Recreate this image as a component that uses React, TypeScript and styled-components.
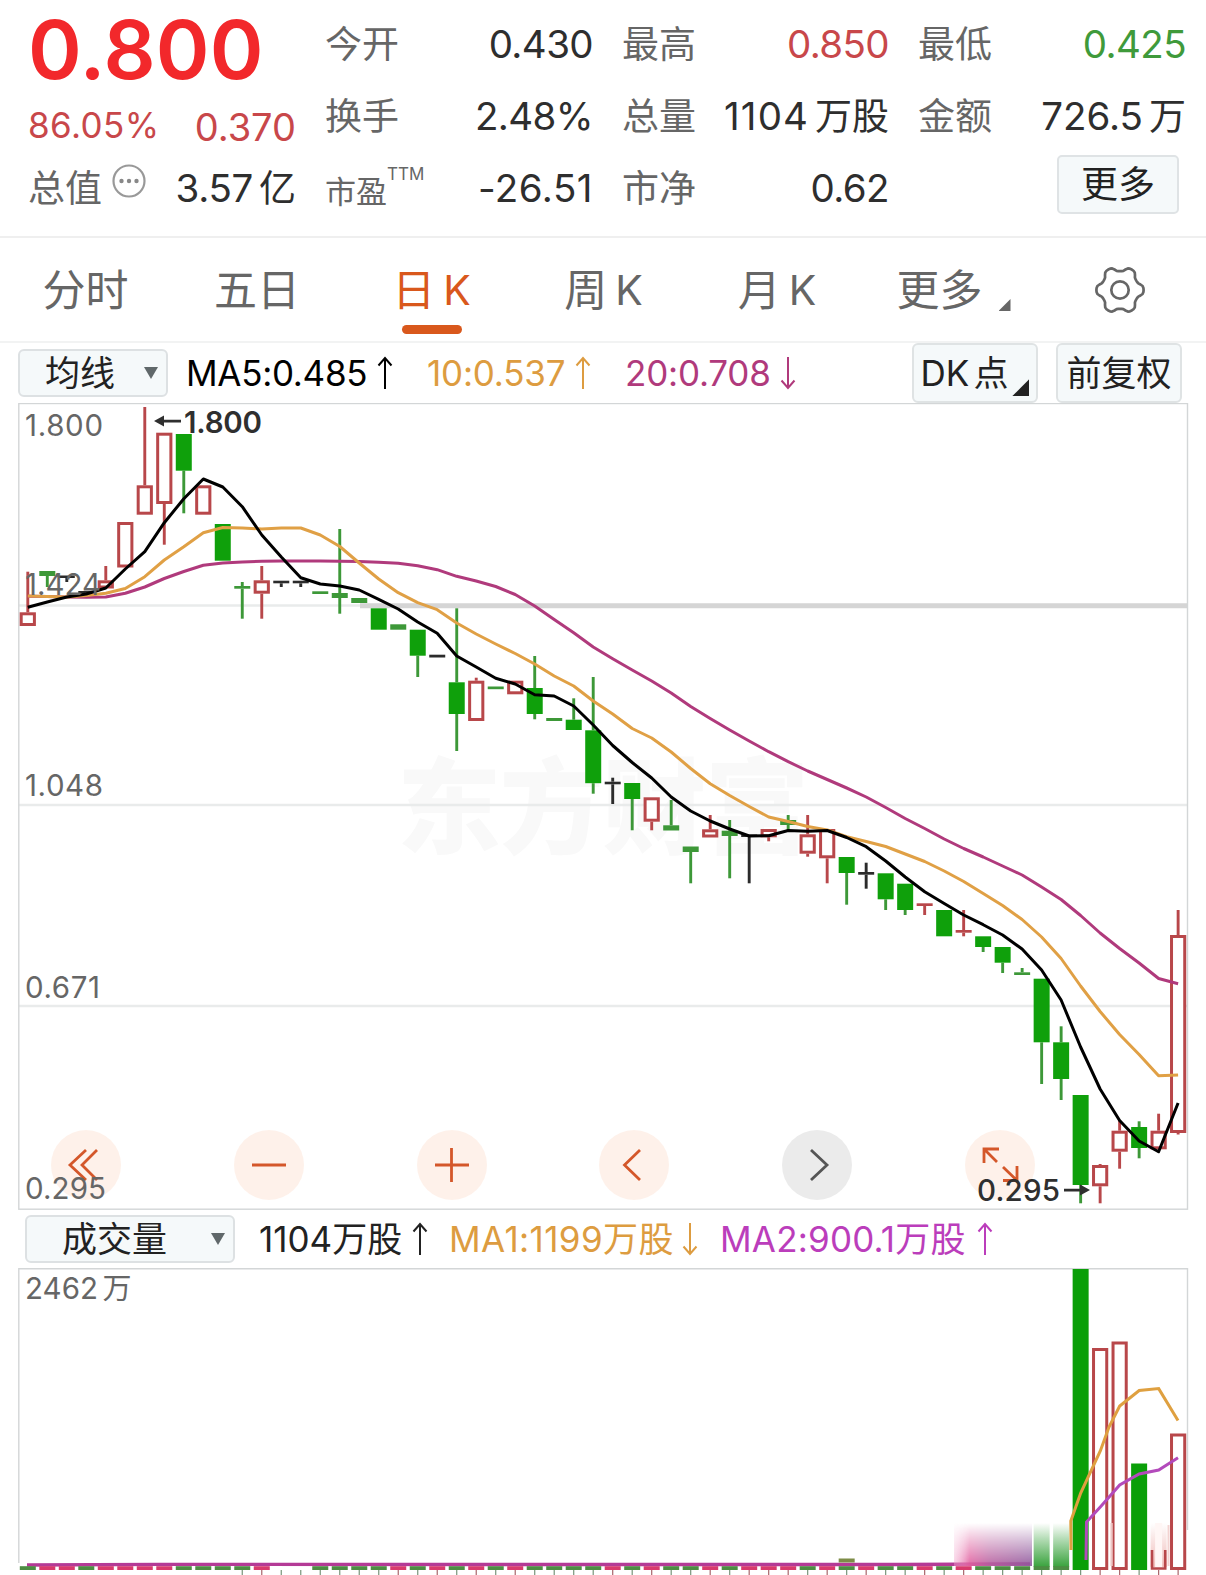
import React from "react";
import styled, { createGlobalStyle } from "styled-components";

const GlobalStyle = createGlobalStyle`
  body { margin: 0; background: #fff; }
  * { box-sizing: border-box; }
`;

const FONT = `Inter, "Noto Sans CJK SC", sans-serif`;
const RED = "#c8474a";
const GREEN = "#3f9a3b";
const ORANGE = "#dd9c40";
const MAGENTA = "#b03a7c";
const VIOLET = "#bb3dbb";
const ACCENT = "#d9581c";

const Page = styled.main`
  width: 1206px;
  height: 1575px;
  overflow: hidden;
  background: #fff;
  font-family: ${FONT};
  color: #2e2e2e;
  white-space: nowrap;
`;

/* ---------- quote header ---------- */

const Quote = styled.section`
  display: grid;
  grid-template-columns: 268px 268px 267px 268px;
  column-gap: 29px;
  height: 238px;
  padding: 8px 0 0 28px;
  border-bottom: 2px solid #efefef;
`;

const Column = styled.div`
  display: flex;
  flex-direction: column;
`;

const Row = styled.div`
  display: flex;
  align-items: center;
  justify-content: space-between;
  height: 72px;
  line-height: 72px;
`;

const Price = styled.div`
  height: 83px;
  line-height: 83px;
  font-size: 81.5px;
  font-weight: 600;
  letter-spacing: 0.1px;
  color: #f2282b;
`;

const ChangeRow = styled.div`
  display: flex;
  align-items: center;
  justify-content: space-between;
  height: 50px;
  margin: 9px 0 2px;
  line-height: 50px;
  color: ${RED};
`;

const Change = styled.span<{ $size: number; $shift?: number; $track?: number }>`
  font-size: ${(p) => p.$size}px;
  letter-spacing: ${(p) => p.$track ?? 0}px;
  padding-top: ${(p) => p.$shift ?? 0}px;
`;

const Label = styled.span<{ $small?: boolean }>`
  display: flex;
  align-items: center;
  font-size: ${(p) => (p.$small ? 31 : 37)}px;
  padding-top: ${(p) => (p.$small ? 8 : 2)}px;
  color: #666;
`;

const Sup = styled.sup`
  font-size: 17px;
  font-weight: 400;
  line-height: 17px;
  margin-bottom: 36px;
`;

const Value = styled.span<{ $color?: string; $track?: number }>`
  display: flex;
  font-size: 38.5px;
  letter-spacing: ${(p) => p.$track ?? -0.6}px;
  color: ${(p) => p.$color ?? "#2e2e2e"};
`;

const Unit = styled.span`
  margin-left: 6px;
  padding-top: 1px;
  font-size: 37px;
  letter-spacing: 0;
`;

const Bubble = styled.svg`
  width: 34px;
  height: 34px;
  margin: -16px 0 0 10px;
`;

const MoreButton = styled.button`
  width: 122px;
  height: 59px;
  margin: 0 7px 7px auto;
  padding: 0;
  border: 2px solid #dfe3e5;
  border-radius: 5px;
  background: #f5f9fa;
  font-family: ${FONT};
  font-size: 37px;
  line-height: 56px;
  color: #222;
`;

/* ---------- period tabs ---------- */

const Tabs = styled.nav`
  display: flex;
  height: 105px;
  border-bottom: 2px solid #f2f3f3;
`;

const Tab = styled.div<{ $width: number; $active?: boolean }>`
  display: flex;
  flex-direction: column;
  align-items: center;
  width: ${(p) => p.$width}px;
  padding-top: 26px;
  font-size: 43px;
  line-height: 52px;
  color: ${(p) => (p.$active ? ACCENT : "#666")};
`;

const TabText = styled.span`
  display: flex;
  gap: 8px;
`;

const Latin = styled.span`
  font-size: 41px;
`;

const Underline = styled.span`
  width: 60px;
  height: 9px;
  margin-top: 9px;
  border-radius: 5px;
  background: ${ACCENT};
`;

const Corner = styled.i<{ $size: number; $color: string; $gap?: number; $lift: number }>`
  align-self: flex-end;
  width: ${(p) => p.$size}px;
  height: ${(p) => p.$size}px;
  margin: 0 0 ${(p) => p.$lift}px ${(p) => p.$gap ?? 0}px;
  background: ${(p) => p.$color};
  clip-path: polygon(100% 0, 100% 100%, 0 100%);
`;

/* ---------- indicator bars ---------- */

const Bar = styled.div<{ $height: number; $left: number }>`
  display: flex;
  align-items: center;
  height: ${(p) => p.$height}px;
  padding: 0 24px 0 ${(p) => p.$left}px;
`;

const Select = styled.div<{ $width: number; $pad: number }>`
  display: flex;
  align-items: center;
  justify-content: space-between;
  width: ${(p) => p.$width}px;
  height: 48px;
  padding: 0 8px 0 ${(p) => p.$pad}px;
  border: 2px solid #dde1e3;
  border-radius: 6px;
  background: #f5f9fa;
  font-size: 35px;
  line-height: 44px;
  color: #222;
`;

const Caret = styled.i`
  width: 14px;
  height: 12px;
  background: #60686a;
  clip-path: polygon(0 0, 100% 0, 50% 100%);
`;

const Reading = styled.div<{ $width: number; $color: string; $track?: number }>`
  display: flex;
  align-items: center;
  justify-content: space-between;
  flex: none;
  width: ${(p) => p.$width}px;
  color: ${(p) => p.$color};
  font-size: 35px;
  letter-spacing: ${(p) => p.$track ?? 0}px;
  line-height: 46px;
`;

const Gap = styled.span<{ $w: number }>`
  flex: none;
  width: ${(p) => p.$w}px;
`;

const Tag = styled.div`
  display: flex;
  align-items: center;
  justify-content: center;
  gap: 4px;
  width: 126px;
  height: 60px;
  border: 2px solid #dfe3e4;
  border-radius: 6px;
  background: #f5f9fa;
  font-size: 35px;
  line-height: 56px;
  color: #222;
`;

function Arrow({ down }: { down?: boolean }) {
  return (
    <svg width="16" height="34" viewBox="0 0 16 34" fill="none" stroke="currentColor" strokeWidth="2">
      <path d={down ? "M8 1V32M1.5 24.5L8 32L14.5 24.5" : "M8 33V2M1.5 9.5L8 2L14.5 9.5"} />
    </svg>
  );
}

/* ---------- charts ---------- */

const ChartArea = styled.section`
  position: relative;
  height: 807px;
`;

const Plot = styled.svg`
  display: block;
  font-family: ${FONT};
`;

const Controls = styled.div`
  position: absolute;
  left: 51px;
  top: 727px;
  width: 984px;
  display: flex;
  justify-content: space-between;
`;

const Round = styled.button<{ $muted?: boolean }>`
  width: 70px;
  height: 70px;
  padding: 0;
  border: 0;
  border-radius: 50%;
  background: ${(p) => (p.$muted ? "#ebebeb" : "rgba(250, 120, 50, 0.1)")};
  color: ${(p) => (p.$muted ? "#555" : "#d4572a")};
`;

const Overlay = styled(Plot)`
  position: absolute;
  inset: 0;
  pointer-events: none;
`;

const X0 = 27.8;
const STEP = 19.497;
const cx = (i: number) => X0 + STEP * i;

type Candle = [kind: "r" | "g" | "k", high: number, top: number, bottom: number, low: number];

const candles: Candle[] = [
  ["r", 571.7, 612.3, 626, 626], ["g", 571, 571, 576, 587], ["k", 575.5, 575.5, 578, 582], ["k", 591, 591, 593, 593],
  ["r", 566, 580.3, 588.5, 588.5], ["r", 522, 522, 567.5, 567.5], ["r", 407, 485.3, 514.7, 514.7], ["r", 432.7, 432.7, 504, 544.7],
  ["g", 434, 434, 470.7, 513.3], ["r", 485.3, 485.3, 514.7, 514.7], ["g", 524, 524, 560.7, 560.7], ["g", 582, 586, 588.7, 618.7],
  ["r", 566, 580.3, 593.7, 618.7], ["k", 580.7, 580.7, 583.3, 587], ["k", 580.7, 580.7, 583.3, 587], ["g", 591.3, 591.3, 594, 594],
  ["g", 529, 593, 598, 613.7], ["g", 598, 598, 603, 603], ["g", 608.3, 608.3, 629.7, 629.7], ["g", 624.3, 624.3, 629.7, 629.7],
  ["g", 629.7, 629.7, 655.7, 677], ["k", 654.7, 654.7, 657.5, 657.5], ["g", 608.3, 682.3, 714, 751], ["r", 677.7, 680.7, 721, 721],
  ["g", 686.5, 686.5, 689.2, 689.2], ["r", 680.7, 680.7, 694.3, 694.3], ["g", 656, 688, 714, 719.3], ["g", 718, 718, 721, 721],
  ["g", 698.3, 719.7, 730, 730], ["g", 677, 730.3, 783.2, 793.7], ["k", 777.7, 781.7, 784.3, 804], ["g", 783, 783, 799, 830.3],
  ["r", 797.3, 797.3, 821.7, 830.3], ["g", 800, 825.3, 830.5, 830.5], ["g", 846.5, 846.5, 852, 883.3], ["r", 815, 829.3, 837.5, 837.5],
  ["g", 820, 830.7, 836, 878.3], ["k", 834.5, 834.5, 837, 883.3], ["r", 829, 829, 837.3, 841.3], ["g", 815, 820, 825, 830.7],
  ["r", 815, 834.3, 853.7, 856.7], ["r", 829, 829, 858.3, 883.3], ["g", 857, 857, 873, 904.7], ["k", 862.7, 872, 874.7, 888.7],
  ["g", 873.3, 873.3, 899.3, 910], ["g", 883.7, 883.7, 910, 915], ["r", 903.3, 903.3, 906, 915], ["g", 910, 910, 936.3, 936.3],
  ["r", 910, 930, 932.7, 936.3], ["g", 936.3, 936.3, 947, 952], ["g", 947, 947, 962.7, 973], ["g", 968, 972.3, 975, 975],
  ["g", 978.7, 978.7, 1042.3, 1084], ["g", 1026.3, 1042.3, 1079, 1100], ["g", 1095, 1095, 1185, 1203.3], ["r", 1164, 1165, 1186.3, 1203.3],
  ["r", 1120, 1130.7, 1151.7, 1168.7], ["g", 1121.3, 1127, 1148, 1158.3], ["r", 1113.7, 1130.7, 1149.3, 1149.3], ["r", 910, 935, 1133, 1134.5],
];

const ma5 = [
  607.3, 602, 597, 594, 588, 569, 551.7, 522.7, 498.7, 479, 487, 506.7, 535, 557, 577.7, 584, 586, 590, 599.3, 609,
  622, 633.3, 656, 667, 678.3, 684, 694.7, 696, 706, 725, 745.5, 762.5, 778, 797, 811, 821, 829, 836, 835.7, 830.5,
  831.3, 830.5, 837.5, 846.7, 861, 877, 891.7, 903.5, 915, 924.7, 935, 949, 970, 1000, 1047, 1089, 1120.5, 1141, 1151.7, 1103,
];
const ma10 = [
  596, 596.5, 597, 595.5, 593.3, 588.5, 576.7, 560, 546.7, 532.7, 527.5, 528, 529, 528, 528, 535, 546.5, 563, 579, 592.7,
  602.7, 609.7, 623, 634, 644, 653.5, 664, 676, 686, 701, 714, 728.5, 738, 752, 768.5, 783.7, 795.5, 806.5, 817, 821.5,
  826.5, 830, 836.7, 841.5, 846.5, 854, 861.5, 871, 881.5, 893.5, 905.5, 919.5, 937, 958.5, 986, 1011.5, 1034.5, 1054.5, 1075.7, 1075,
];
const ma20 = [
  596.3, 596.5, 597, 597.3, 597, 593.3, 587, 578.5, 571.5, 565.3, 563, 562, 561.2, 561, 561, 561, 561.2, 561.5, 562.3, 563.3,
  565.7, 569.7, 576.3, 581, 586.5, 594.5, 606, 619.5, 632.7, 647, 658.7, 670, 681, 693, 706.5, 718.5, 730, 741, 751.7, 761.7,
  771, 779.5, 788, 797, 807.5, 818.5, 828.5, 839, 848.5, 857, 866, 875, 887, 899.5, 915.5, 933, 948.5, 963, 978.5, 983.7,
];

const toPoints = (ys: number[]) => ys.map((y, i) => `${cx(i).toFixed(1)},${y}`).join(" ");

const INK = { r: "#b8474a", g: "#3d9838", k: "#2b2b2b" };

function CandleMark({ i, c }: { i: number; c: Candle }) {
  const [kind, high, top, bottom, low] = c;
  const x = cx(i);
  const ink = INK[kind];
  const flat = bottom - top < 4;
  return (
    <g>
      {high < top && <line x1={x} x2={x} y1={high} y2={top} stroke={ink} strokeWidth="2.9" />}
      {low > bottom && <line x1={x} x2={x} y1={bottom} y2={low} stroke={ink} strokeWidth="2.9" />}
      {kind === "r" && !flat ? (
        <rect x={x - 6.6} y={top + 1.5} width="13.2" height={bottom - top - 3} fill="#fff" stroke={ink} strokeWidth="3" />
      ) : (
        <rect x={x - 8} y={top} width="16" height={bottom - top} fill={kind === "g" && bottom - top > 6 ? "#0fa00b" : ink} />
      )}
    </g>
  );
}

function PriceChart() {
  return (
    <Plot width="1206" height="807" viewBox="0 403 1206 807">
      <text x="397" y="846" fontSize="104" fontWeight="900" fill="#f9f9f9" textLength="412">东方财富</text>
      <path d="M19 605.5H1187M19 805H1187M19 1006H1187" stroke="#e9ebeb" strokeWidth="2.5" />
      <path d="M360 605.8H1187" stroke="#d5d5d5" strokeWidth="5" />
      <rect x="18.8" y="403.5" width="1168.7" height="805.7" fill="none" stroke="#d3d6d7" strokeWidth="1.4" />
      {candles.map((c, i) => <CandleMark key={i} i={i} c={c} />)}
      <g fill="none" strokeWidth="3" strokeLinejoin="round">
        <polyline points={toPoints(ma20)} stroke={MAGENTA} />
        <polyline points={toPoints(ma10)} stroke="#e0a045" />
        <polyline points={toPoints(ma5)} stroke="#000" />
      </g>
    </Plot>
  );
}

const axis: [string, number, number][] = [["1.800", 435.5, 78], ["1.424", 594.5, 76], ["1.048", 796, 78], ["0.671", 997.5, 75], ["0.295", 1198.5, 81]];

function ChartLabels() {
  return (
    <Overlay width="1206" height="807" viewBox="0 403 1206 807">
      {axis.map(([t, y, w]) => (
        <text key={t} x="25" y={y} fontSize="29.5" fill="#666" textLength={w}>{t}</text>
      ))}
      <g fill="#2f2f2f" stroke="none" fontSize="29.5" fontWeight="600">
        <text x="184" y="432.5" textLength="78">1.800</text>
        <text x="977" y="1201" textLength="83" fontWeight="500">0.295</text>
        <path d="M154 421L164 415.5V419.7H181V422.5H164V426.5Z" />
        <path d="M1090 1190L1080 1184.5V1188.7H1064V1191.5H1080V1195.5Z" />
      </g>
    </Overlay>
  );
}

const glyphs = [
  "M46 20L31 35L46 50M35 20L19 35L35 50",
  "M18 35H52",
  "M18 35H52M34.5 18V52",
  "M41 20L25.5 35L41 50",
  "M29 20L45 35L29 50",
  "M19 33V19H34M19 19L32 32M52 36V50.5H38M52 50.5L38 37",
];

/* ---------- volume ---------- */

const volumeKinds = ["grrg", "rrrr", "gggg", "r..", "gggg", "rgrgrgr", "gggg", "rgrgg", "rg", "rrr", "grgrgg", "rgr", "gggggg", "rrgrr"].join("");
const tallTops: Record<number, number> = { 54: 1269, 55: 1348, 56: 1341.5, 57: 1463.5, 59: 1433.5 };
const BASE = 1570;

function VolumeChart() {
  return (
    <Plot width="1206" height="307" viewBox="0 1268 1206 307">
      <defs>
        {[["greenFade", "#2f9e33"], ["roseFade", "#efb9b6"], ["maskFade", "#fff"]].map(([id, color]) => (
          <linearGradient key={id} id={id} x1="0" y1="0" x2="0" y2="1">
            <stop offset="0" stopColor={color} stopOpacity="0" />
            <stop offset="0.35" stopColor={color} stopOpacity="0.35" />
            <stop offset="1" stopColor={color} stopOpacity="0.95" />
          </linearGradient>
        ))}
        <linearGradient id="across" x1="0" x2="1" y1="0" y2="0">
          <stop offset="0" stopColor="#f2a3cb" stopOpacity="0.5" />
          <stop offset="0.2" stopColor="#e0609f" />
          <stop offset="0.45" stopColor="#b8609f" />
          <stop offset="1" stopColor="#8f5a9d" />
        </linearGradient>
        <mask id="rise">
          <rect x="954" y="1523" width="78" height="44" fill="url(#maskFade)" />
        </mask>
      </defs>
      <path d="M18.8 1563V1268.8H1187.5V1530" fill="none" stroke="#d3d6d7" strokeWidth="1.4" />
      <path d="M27 1565L160 1564.4L900 1564.5L1030 1564" stroke="#b43a96" strokeWidth="3.4" fill="none" />
      <rect x="954" y="1523" width="78" height="43" fill="url(#across)" mask="url(#rise)" />
      {volumeKinds.split("").map((k, i) => {
        const x = cx(i);
        const red = k === "r";
        const tick = i > 10 && <line x1={x} x2={x} y1="1570" y2="1575" stroke={red ? "#a8656a" : "#78957a"} strokeWidth="1.2" />;
        if (k === ".") return <g key={i}>{tick}</g>;
        const top = tallTops[i];
        if (top) {
          return (
            <g key={i}>
              {tick}
              {red ? (
                <rect x={x - 6.6} y={top + 1.5} width="13.2" height={BASE - top - 3} fill="#fff" stroke={INK.r} strokeWidth="3" />
              ) : (
                <rect x={x - 8} y={top} width="16" height={BASE - top} fill="#0a9f08" />
              )}
            </g>
          );
        }
        if (i === 58) {
          return (
            <g key={i}>
              {tick}
              <rect x={x - 8} y="1523" width="16" height="44" fill="url(#roseFade)" />
              <rect x={x - 3.5} y="1523" width="7" height="44" fill="#fff6f5" />
              <path d={`M${x - 6.6} 1550V1568.5H${x + 6.6}V1550`} fill="none" stroke={INK.r} strokeWidth="2.6" />
            </g>
          );
        }
        return (
          <g key={i}>
            {tick}
            {(i === 52 || i === 53) && <rect x={x - 8} y="1523" width="16" height="44" fill="url(#greenFade)" />}
            {i === 42 && <rect x={x - 8} y="1558.5" width="16" height="4" fill="#7d8c47" />}
            <rect x={x - 8} y="1566.2" width="16" height="3.8" fill={red ? "#d83a6d" : "#4d8d43"} />
          </g>
        );
      })}
      <path d="M1111.5 1523V1566" stroke="#f3d3d1" strokeWidth="3" opacity="0.7" />
      <path d="M1168.5 1525V1566" stroke="#e9a9a5" strokeWidth="2" opacity="0.5" />
      <polyline points="1071,1550 1070.8,1521 1080.7,1493 1100.3,1451 1109,1427 1119.7,1406 1139.2,1390.5 1158.7,1388.6 1178,1420.5" fill="none" stroke="#dfa040" strokeWidth="3" />
      <polyline points="1086,1560 1086.5,1522 1100.3,1507 1119.7,1485 1139.2,1474 1158.7,1470 1178,1457.7" fill="none" stroke="#b34abb" strokeWidth="3" />
      <text x="25" y="1298.5" fontSize="29.5" fill="#666" textLength="73">2462</text>
      <text x="102.500" y="1298.5" fontSize="29" fill="#666">万</text>
    </Plot>
  );
}

function Gear() {
  const lobes: string[] = [];
  const n = 72;
  for (let k = 0; k < n; k++) {
    const a = (k / n) * Math.PI * 2;
    const wave = Math.cos(6 * a);
    const r = 21.2 + 2.6 * Math.tanh(1.6 * wave);
    lobes.push(`${(26 + r * Math.cos(a)).toFixed(2)},${(26 + r * Math.sin(a)).toFixed(2)}`);
  }
  return (
    <svg width="52" height="52" viewBox="0 0 52 52" fill="none" stroke="#666" strokeWidth="2.7" strokeLinejoin="round">
      <polygon points={lobes.join(" ")} />
      <circle cx="26" cy="26" r="8.7" />
    </svg>
  );
}

export default function App() {
  return (
    <Page>
      <GlobalStyle />
      <Quote>
        <Column>
          <Price>0.800</Price>
          <ChangeRow>
            <Change $size={35} $track={0.4}>86.05%</Change>
            <Change $size={38} $shift={3}>0.370</Change>
          </ChangeRow>
          <Row>
            <Label>
              总值
              <Bubble viewBox="0 0 34 34" fill="none" stroke="#999" strokeWidth="2.2">
                <circle cx="17" cy="17" r="15.500" />
                <g fill="#888" stroke="none">
                  <circle cx="9.500" cy="17" r="2.200" /><circle cx="17" cy="17" r="2.200" /><circle cx="24.500" cy="17" r="2.200" />
                </g>
              </Bubble>
            </Label>
            <Value $track={-0.3}>3.57<Unit>亿</Unit></Value>
          </Row>
        </Column>
        <Column>
          <Row><Label>今开</Label><Value>0.430</Value></Row>
          <Row><Label>换手</Label><Value>2.48%</Value></Row>
          <Row><Label $small>市盈<Sup>TTM</Sup></Label><Value $track={0.5}>-26.51</Value></Row>
        </Column>
        <Column>
          <Row><Label>最高</Label><Value $color={RED}>0.850</Value></Row>
          <Row><Label>总量</Label><Value $track={1.1}>1104<Unit>万股</Unit></Value></Row>
          <Row><Label>市净</Label><Value>0.62</Value></Row>
        </Column>
        <Column>
          <Row><Label>最低</Label><Value $color={GREEN}>0.425</Value></Row>
          <Row><Label>金额</Label><Value $track={0}>726.5<Unit>万</Unit></Value></Row>
          <Row><MoreButton>更多</MoreButton></Row>
        </Column>
      </Quote>

      <Tabs>
        <Tab $width={171}>分时</Tab>
        <Tab $width={172}>五日</Tab>
        <Tab $width={177} $active><TabText>日<Latin>K</Latin></TabText><Underline /></Tab>
        <Tab $width={167}><TabText>周<Latin>K</Latin></TabText></Tab>
        <Tab $width={180}><TabText>月<Latin>K</Latin></TabText></Tab>
        <Tab $width={173}><TabText>更多<Corner $size={12} $color="#666" $gap={8} $lift={5} /></TabText></Tab>
        <Tab $width={159}><Gear /></Tab>
      </Tabs>

      <Bar $height={60} $left={18}>
        <Select $width={150} $pad={25}>均线<Caret /></Select>
        <Gap $w={18} />
        <Reading $width={207} $color="#000" $track={-0.3}>MA5:0.485<Arrow /></Reading>
        <Gap $w={34} />
        <Reading $width={164} $color={ORANGE} $track={-0.2}>10:0.537<Arrow /></Reading>
        <Gap $w={34} />
        <Reading $width={171} $color={MAGENTA} $track={-0.2}>20:0.708<Arrow down /></Reading>
        <Gap $w={116} />
        <Tag>DK<span>点</span><Corner $size={17} $color="#222" $lift={5} /></Tag>
        <Gap $w={18} />
        <Tag>前复权</Tag>
      </Bar>

      <ChartArea>
        <PriceChart />
        <Controls>
          {glyphs.map((d, i) => (
            <Round key={i} $muted={i === 4}>
              <svg width="70" height="70" viewBox="0 0 70 70" fill="none" stroke="currentColor" strokeWidth="2.8">
                <path d={d} />
              </svg>
            </Round>
          ))}
        </Controls>
        <ChartLabels />
      </ChartArea>

      <Bar $height={58} $left={25}>
        <Select $width={210} $pad={35}>成交量<Caret /></Select>
        <Gap $w={24} />
        <Reading $width={169} $color="#222">1104万股<Arrow /></Reading>
        <Gap $w={21} />
        <Reading $width={249} $color={ORANGE} $track={0.4}>MA1:1199万股<Arrow down /></Reading>
        <Gap $w={22} />
        <Reading $width={273} $color={VIOLET} $track={0.2}>MA2:900.1万股<Arrow /></Reading>
      </Bar>
      <VolumeChart />
    </Page>
  );
}
